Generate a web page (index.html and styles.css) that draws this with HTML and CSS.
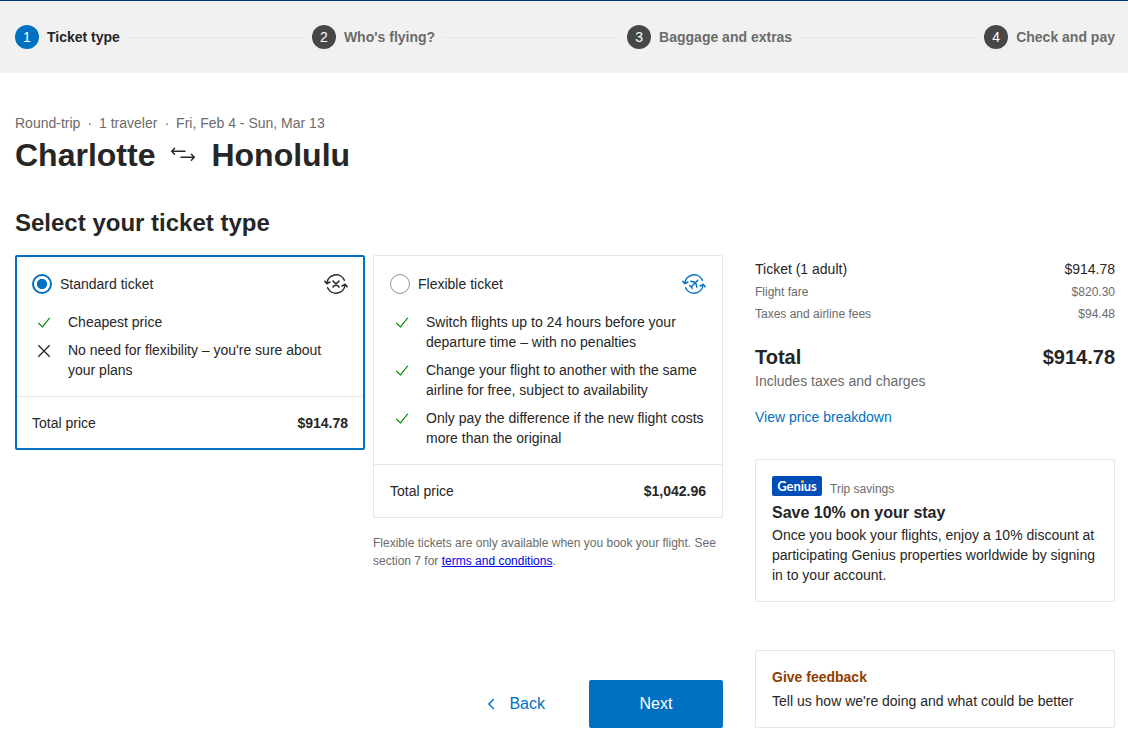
FILE: index.html
```html
<!DOCTYPE html>
<html lang="en">
<head>
<meta charset="utf-8">
<title>Ticket type</title>
<link rel="stylesheet" href="styles.css">
</head>
<body>
<svg class="defs" aria-hidden="true">
  <symbol id="check" viewBox="0 0 24 24"><path d="M6.3 13 10.4 16.8 17.7 7.9" fill="none" stroke="#008c0a" stroke-width="1.15"/></symbol>
  <symbol id="cycle" viewBox="0 0 24 24">
    <g fill="none" stroke="currentColor" stroke-width="1.5" stroke-linecap="round" stroke-linejoin="round">
      <path d="M2.9 11.2A9.2 9.2 0 0 1 20.4 8.2M21.1 12.8A9.2 9.2 0 0 1 3.6 15.8"/>
      <path d="M.9 9.2 2.8 11.7 5.9 10M18.1 14 21.2 12.3 23.1 14.8"/>
    </g>
  </symbol>
</svg>
<header class="topbar">
  <ol class="steps">
    <li class="step step-active"><span class="num">1</span>Ticket type</li>
    <li class="line"></li>
    <li class="step"><span class="num">2</span>Who's flying?</li>
    <li class="line"></li>
    <li class="step"><span class="num">3</span>Baggage and extras</li>
    <li class="line"></li>
    <li class="step"><span class="num">4</span>Check and pay</li>
  </ol>
</header>
<div class="page">
  <div class="meta"><span>Round-trip</span><span>·</span><span>1 traveler</span><span>·</span><span>Fri, Feb 4 - Sun, Mar 13</span></div>
  <h1 class="route">Charlotte
    <svg width="24" height="24" viewBox="0 0 24 24" fill="none" stroke="#262626" stroke-width="1.4" stroke-linecap="round" stroke-linejoin="round"><path d="M14 8.2H.8M3.6 5.2.7 8.2l2.9 3M10 14.2h13.2M20.4 11.2l2.9 3-2.9 3"/></svg>
    Honolulu</h1>
  <h2 class="heading">Select your ticket type</h2>
  <div class="columns">
    <main class="main">
      <div class="tickets">
        <div class="option">
          <section class="card card-selected">
            <div class="card-body">
              <div class="card-head">
                <span class="radio radio-on"></span><span class="name">Standard ticket</span>
                <svg class="type" viewBox="0 0 24 24"><use href="#cycle"/><path d="M9 9l6 6M15 9l-6 6" stroke="currentColor" stroke-width="1.6" stroke-linecap="round"/></svg>
              </div>
              <ul class="features">
                <li><svg viewBox="0 0 24 24"><use href="#check"/></svg><span>Cheapest price</span></li>
                <li><svg viewBox="0 0 24 24"><path d="M6.3 7.3l11.4 11.4M17.7 7.3 6.3 18.7" stroke="#262626" stroke-width="1.3"/></svg><span>No need for flexibility – you're sure about your plans</span></li>
              </ul>
            </div>
            <div class="card-total"><span>Total price</span><strong>$914.78</strong></div>
          </section>
        </div>
        <div class="option">
          <section class="card">
            <div class="card-body">
              <div class="card-head">
                <span class="radio"></span><span class="name">Flexible ticket</span>
                <svg class="type type-flex" viewBox="0 0 24 24"><use href="#cycle"/><g fill="none" stroke="currentColor" stroke-width="1.4" stroke-linecap="round" stroke-linejoin="round"><path d="M9 15 15.8 8.2M8.8 9.2l4.2 1M14.8 15.2l-1-4.2M7.6 13.6l1.8 1 1 1.8"/></g></svg>
              </div>
              <ul class="features">
                <li><svg viewBox="0 0 24 24"><use href="#check"/></svg><span>Switch flights up to 24 hours before your departure time – with no penalties</span></li>
                <li><svg viewBox="0 0 24 24"><use href="#check"/></svg><span>Change your flight to another with the same airline for free, subject to availability</span></li>
                <li><svg viewBox="0 0 24 24"><use href="#check"/></svg><span>Only pay the difference if the new flight costs more than the original</span></li>
              </ul>
            </div>
            <div class="card-total"><span>Total price</span><strong>$1,042.96</strong></div>
          </section>
          <p class="note">Flexible tickets are only available when you book your flight. See section 7 for <a href="#">terms and conditions</a>.</p>
        </div>
      </div>
      <div class="actions">
        <button class="btn btn-back"><svg width="8" height="12" viewBox="0 0 8 12" fill="none" stroke="currentColor" stroke-width="1.4" stroke-linecap="round" stroke-linejoin="round"><path d="M6.4 1.4 1.8 6l4.6 4.6"/></svg>Back</button>
        <button class="btn btn-next">Next</button>
      </div>
    </main>
    <aside class="side">
      <div class="price"><span>Ticket (1 adult)</span><span>$914.78</span></div>
      <div class="price price-small"><span>Flight fare</span><span>$820.30</span></div>
      <div class="price price-small"><span>Taxes and airline fees</span><span>$94.48</span></div>
      <div class="price price-total"><span>Total</span><span>$914.78</span></div>
      <div class="muted">Includes taxes and charges</div>
      <a class="breakdown">View price breakdown</a>
      <section class="box">
        <div class="genius-row"><span class="genius">Genius</span><span class="label">Trip savings</span></div>
        <h3 class="box-title">Save 10% on your stay</h3>
        <p class="text">Once you book your flights, enjoy a 10% discount at participating Genius properties worldwide by signing in to your account.</p>
      </section>
      <section class="box feedback">
        <h3 class="feedback-title">Give feedback</h3>
        <p class="text">Tell us how we're doing and what could be better</p>
      </section>
    </aside>
  </div>
</div>
</body>
</html>
```

FILE: styles.css
```css
* { box-sizing: border-box; }
html { overflow: hidden; }
body { margin: 0; background: #fff; color: #262626; font: 14px/20px "Liberation Sans", Arial, sans-serif; }
h1, h2, h3, p, ul, ol { margin: 0; padding: 0; list-style: none; }
svg { display: block; flex: none; }
.defs { display: none; }

.topbar { height: 73px; padding: 24px 13px 24px 15px; background: #f1f1f1; border-top: 1px solid #003580; }
.steps { display: flex; align-items: center; gap: 8px; }
.step { display: flex; align-items: center; gap: 8px; font-weight: 700; color: #6b6b6b; }
.step-active { color: #262626; }
.num { width: 24px; height: 24px; border-radius: 50%; background: #474747; color: #fff; font-weight: 400; line-height: 24px; text-align: center; }
.step-active .num { background: #0071c2; }
.line { flex: 1; height: 1px; background: #e6e6e6; }

.page { padding: 40px 13px 0 15px; }
.meta { display: flex; gap: 7px; color: #6b6b6b; }
.route { display: flex; align-items: center; gap: 16px; margin-top: 2px; font-size: 32px; line-height: 40px; }
.heading { margin-top: 32px; font-size: 24px; line-height: 32px; }
.columns { display: flex; gap: 32px; margin-top: 16px; }
.main { display: flex; flex: 1; flex-direction: column; justify-content: space-between; }
.tickets { display: grid; grid-template-columns: 1fr 1fr; gap: 8px; align-items: start; }

.card { border: 1px solid #e6e6e6; border-radius: 2px; }
.card-body { padding: 16px; }
.card-selected { border: 2px solid #0071c2; }
.card-selected .card-body { padding: 15px 15px 16px; }
.card-selected .card-total { padding: 16px 15px 15px; }
.card-head { display: flex; align-items: center; gap: 8px; }
.name { flex: 1; }
.radio { width: 20px; height: 20px; border: 1px solid #949494; border-radius: 50%; }
.radio-on { border: 2px solid #0071c2; background: radial-gradient(circle, #0071c2 4.8px, #fff 5.4px); }
.type { width: 24px; height: 24px; overflow: visible; }
.type-flex { color: #0071c2; }
.features { display: grid; gap: 8px; margin-top: 16px; }
.features li { display: flex; gap: 12px; }
.features svg { width: 24px; height: 24px; margin-top: -2px; margin-bottom: -2px; }
.card-total { display: flex; justify-content: space-between; padding: 16px; border-top: 1px solid #e6e6e6; }
.note { margin-top: 16px; font-size: 12px; line-height: 18px; color: #6b6b6b; }
.note a { color: #00e; }

.actions { display: flex; justify-content: flex-end; gap: 28px; }
.btn { height: 48px; border: 0; border-radius: 2px; font: 16px/24px "Liberation Sans", Arial, sans-serif; }
.btn-back { display: flex; align-items: center; gap: 14px; padding: 0 16px; background: none; color: #0071c2; }
.btn-next { width: 134px; background: #0071c2; color: #fff; }

.side { width: 360px; padding-top: 4px; }
.price { display: flex; justify-content: space-between; }
.price-small { margin-top: 4px; font-size: 12px; line-height: 18px; color: #6b6b6b; }
.price-total { margin-top: 20px; font-size: 20px; line-height: 28px; font-weight: 700; }
.muted { color: #6b6b6b; }
.breakdown { display: block; margin-top: 16px; color: #0071c2; }
.box { margin-top: 32px; padding: 16px; border: 1px solid #e6e6e6; border-radius: 2px; }
.genius-row { display: flex; gap: 8px; height: 24px; }
.genius { position: relative; width: 50px; height: 20px; border-radius: 2px; background: #004cb8; color: #fff; font: 700 13px/20px Lato, sans-serif; letter-spacing: -.1px; text-align: center; }
.genius::after { content: ""; position: absolute; top: 4px; left: 28.5px; width: 3px; height: 3px; border-radius: 50%; background: #febb02; }
.label { padding-top: 4px; font-size: 12px; line-height: 18px; color: #6b6b6b; }
.box-title { padding-top: 1px; font-size: 16px; line-height: 24px; }
.feedback { margin-top: 48px; }
.feedback-title { color: #923e01; font-size: 14px; line-height: 20px; }
.feedback .text { margin-top: 4px; }
```
